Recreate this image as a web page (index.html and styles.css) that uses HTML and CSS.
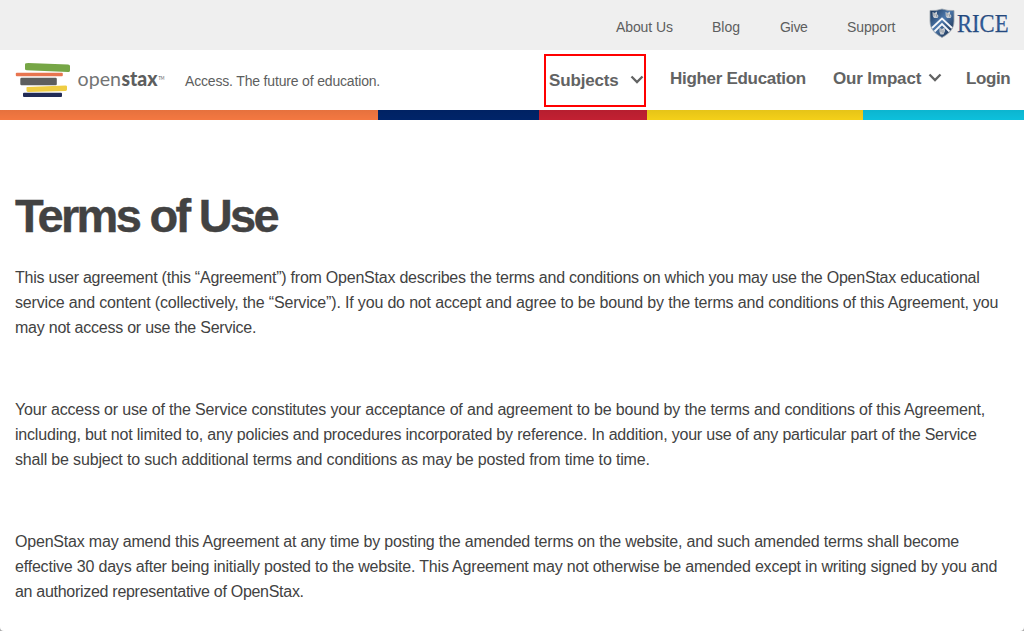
FILE: index.html
```html
<!DOCTYPE html>
<html lang="en">
<head>
<meta charset="utf-8">
<title>Terms of Use - OpenStax</title>
<link rel="stylesheet" href="styles.css">
</head>
<body>
<div class="page">
  <header>
    <nav class="utility">
      <a class="about">About Us</a>
      <a class="blog">Blog</a>
      <a class="give">Give</a>
      <a class="support">Support</a>
      <svg class="rice" width="86" height="36" viewBox="0 0 86 36" role="img" aria-label="Rice">
        <defs>
          <linearGradient id="shield" x1="0" x2="1" y2="1"><stop stop-color="#173154"/><stop offset=".45" stop-color="#4d79ad"/><stop offset="1" stop-color="#10213c"/></linearGradient>
          <linearGradient id="rice" x2="0" y2="1"><stop stop-color="#173764"/><stop offset=".55" stop-color="#355f9f"/><stop offset="1" stop-color="#173764"/></linearGradient>
        </defs>
        <path d="M1 2.500Q7 3 13 1Q19 3 25 2.500V13C25 22 19 26 13 29.500C7 26 1 22 1 13Z" fill="url(#shield)" stroke="#9ba3ac" stroke-width=".8"/>
        <path d="M3 20L13 10.500L23 20M5.500 23.500L13 16L20.500 23.500" fill="none" stroke="#f5f7fa" stroke-width="1.800"/>
        <g fill="#c8cdd3"><path id="owl" d="M3.500 4L5.500 5L8 3.500L8 6L9.500 8L8.500 10H5L3.800 8Z"/><use href="#owl" x="13"/><path d="M10.500 20L13 21L15.500 19.500L16 23L14.500 26.500H11.500L10.500 24Z"/></g>
        <path d="M5 5v3M7 6l1 3M18 5v3M20 6l1 3M12 21v3M14 22v3" stroke="#7e8791" stroke-width=".7"/>
        <text class="rice-name" x="28" y="24" textLength="51.500" lengthAdjust="spacingAndGlyphs" fill="url(#rice)" stroke="#294f85" stroke-width=".25">RICE</text>
      </svg>
    </nav>
    <div class="masthead">
      <svg class="logo" width="156" height="42" viewBox="0 0 156 42" role="img" aria-label="OpenStax">
        <path d="M11.500 1.500Q11.500 1 13 1L53 2.500Q55 2.600 55 4V8.500Q55 10.200 53 10L12 8.300Q10 8.200 10 7V2.500Q10 1.200 11.500 1Z" fill="#76a646"/>
        <rect x=".8" y="10.800" width="47" height="3.400" rx="1" fill="#e87550"/>
        <rect x="5.300" y="15.700" width="36.500" height="7.500" rx="1.200" fill="#5d5e5e"/>
        <path d="M12 25L50.500 23.400Q52 23.400 52 24.600V27.600Q52 28.900 50.500 28.900L13 30Q11.500 30 11.500 28.600V26.200Q11.500 25 12 25Z" fill="#efcd43"/>
        <rect x="8" y="30.700" width="39" height="4.300" rx="1" fill="#212b56"/>
        <text class="brand" x="62.500" y="23.800" textLength="43.500" lengthAdjust="spacingAndGlyphs">open</text>
        <text class="brand brand-bold" x="106.500" y="23.800" textLength="36" lengthAdjust="spacingAndGlyphs">stax</text>
        <text class="mark" x="143.500" y="18" textLength="6" lengthAdjust="spacingAndGlyphs">TM</text>
      </svg>
      <span class="tagline">Access. The future of education.</span>
      <nav class="main-nav">
        <a class="subjects"><span>Subjects</span><svg width="14" height="10" viewBox="0 0 14 10"><path d="M1.500 1.500L7 7L12.500 1.500"/></svg></a>
        <a class="higher">Higher Education</a>
        <a class="impact"><span>Our Impact</span><svg width="14" height="10" viewBox="0 0 14 10"><path d="M1.500 1.500L7 7L12.500 1.500"/></svg></a>
        <a class="login">Login</a>
      </nav>
    </div>
    <div class="stripe"><i class="orange"></i><i class="navy"></i><i class="red"></i><i class="yellow"></i><i class="cyan"></i></div>
  </header>
  <main>
    <h1>Terms of Use</h1>
    <p><span class="tight">This user agreement (this “Agreement”) from OpenStax describes the terms and conditions on which you may use the OpenStax educational</span>
    <span class="loose">service and content (collectively, the “Service”). If you do not accept and agree to be bound by the terms and conditions of this Agreement, you</span>
    <span class="tight">may not access or use the Service.</span></p>
    <p><span class="loose">Your access or use of the Service constitutes your acceptance of and agreement to be bound by the terms and conditions of this Agreement,</span>
    <span>including, but not limited to, any policies and procedures incorporated by reference. In addition, your use of any particular part of the Service</span>
    <span class="loose">shall be subject to such additional terms and conditions as may be posted from time to time.</span></p>
    <p><span>OpenStax may amend this Agreement at any time by posting the amended terms on the website, and such amended terms shall become</span>
    <span>effective 30 days after being initially posted to the website. This Agreement may not otherwise be amended except in writing signed by you and</span>
    <span class="tighter">an authorized representative of OpenStax.</span></p>
  </main>
</div>
</body>
</html>
```
FILE: styles.css
```css
* { box-sizing: border-box; }
body { margin: 0; background: #aaa; font-family: "Liberation Sans", Arial, sans-serif; }
.page { height: 631px; overflow: hidden; background: #fff; border-radius: 0 0 4px 4px; color: #424242; }
.utility { height: 50px; background: #efefef; display: flex; align-items: flex-start; padding-left: 616px; font-size: 14px; line-height: 18px; color: #5d5e5e; white-space: nowrap; }
.utility a { margin-top: 18px; }
.about { width: 96px; letter-spacing: -.1px; }
.blog { width: 68px; }
.give { width: 67px; letter-spacing: -.3px; }
.support { width: 82px; letter-spacing: -.1px; }
.rice { margin-top: 8px; flex: none; }
.rice-name { font: 25px "Liberation Serif", serif; }
.masthead { height: 60px; display: flex; align-items: flex-start; padding-left: 15px; color: #5d5e5e; white-space: nowrap; }
.logo { margin-top: 12px; flex: none; }
.brand { font: 400 20px Lato, sans-serif; fill: #737474; }
.brand-bold { font-weight: 900; fill: #5d5e5e; }
.mark { font: 5px Lato, sans-serif; fill: #5d5e5e; }
.tagline { width: 373px; margin-top: 22px; padding-left: 14px; font-size: 14px; line-height: 18px; letter-spacing: -.17px; }
.main-nav { display: flex; font-size: 17px; font-weight: 700; line-height: 20px; letter-spacing: -.15px; color: #626363; }
.main-nav a { margin-top: 19px; flex: none; }
.main-nav svg { fill: none; stroke: #626363; stroke-width: 2.3; }
.main-nav .subjects { width: 102px; height: 53px; margin-top: 4px; border: 2px solid red; padding: 15px 0 0 3px; display: flex; }
.subjects svg { margin: 4px 0 0 11px; }
.subjects span { width: 70px; }
.higher { width: 163px; padding-left: 24px; margin-right: 24px; letter-spacing: -.3px; }
.impact { width: 109px; display: flex; }
.impact span { width: 89px; }
.impact svg { margin: 4px 0 0 6px; }
.login { margin-left: 24px; letter-spacing: -.4px; }
.stripe { height: 10px; display: grid; grid-template-columns: 378px 161px 108px 216px 161px; }
.stripe i { background-image: linear-gradient(rgba(0, 0, 0, .06), transparent); }
.orange { background-color: #f47841; }
.navy { background-color: #002469; }
.red { background-color: #c22032; }
.yellow { background-color: #f4d019; }
.cyan { background-color: #0dc0dc; }
main { padding: 66px 15px 0; }
h1 { margin: 0 0 19px; font-size: 47px; line-height: 60px; letter-spacing: -2.700px; -webkit-text-stroke: .4px #424242; }
p { margin: 0 0 57px; font-size: 16px; line-height: 25px; letter-spacing: -.195px; }
p span { display: block; white-space: nowrap; }
.tight { letter-spacing: -.23px; }
.loose { letter-spacing: -.167px; }
.tighter { letter-spacing: -.29px; }
```
